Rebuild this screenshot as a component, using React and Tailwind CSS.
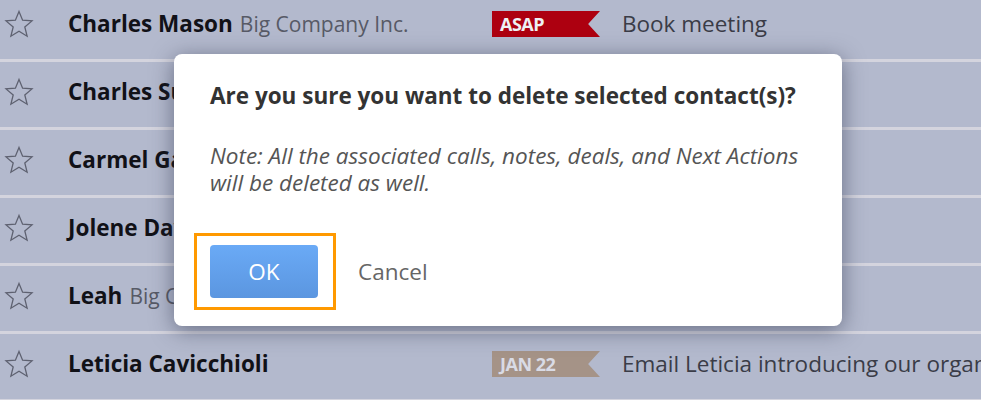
import React from "react";

function Star() {
  return (
    <svg width="30" height="30" viewBox="0 0 30 30" className="shrink-0">
      <polygon
        points="15,2.5 18.6,11.2 28,11.9 20.8,18 23.1,27.2 15,22.2 6.9,27.2 9.2,18 2,11.9 11.4,11.2"
        fill="none"
        stroke="#5e6170"
        strokeWidth="1.3"
        strokeLinejoin="miter"
      />
    </svg>
  );
}

function Tag({ label, color, text }) {
  return (
    <div
      className={`flex h-[26px] w-[108px] shrink-0 items-center pl-[8px] text-[18px] font-bold tracking-[-0.5px] [clip-path:polygon(0_0,100%_0,89%_50%,100%_100%,0_100%)] ${color} ${text}`}
    >
      {label}
    </div>
  );
}

const rows = [
  { name: "Charles Mason", company: "Big Company Inc.", tag: "asap", task: "Book meeting" },
  { name: "Charles Sullivan", company: "" },
  { name: "Carmel Garcia", company: "" },
  { name: "Jolene Davis", company: "" },
  { name: "Leah", company: "Big Company Inc." },
  { name: "Leticia Cavicchioli", company: "", tag: "jan", task: "Email Leticia introducing our organization" },
];

export default function App() {
  return (
    <div
      className="relative h-[400px] w-[981px] overflow-hidden bg-[#b3b9cd]"
      style={{ fontFamily: '"Open Sans", "Liberation Sans", sans-serif' }}
    >
      <div className="-mt-[6px] flex flex-col">
        {rows.map((r, i) => (
          <div
            key={i}
            className="flex h-[68px] shrink-0 items-center border-b-[3px] border-[#d4d4de] pb-[5px] pl-[4px]"
          >
            <Star />
            <div className="ml-[34px] flex w-[424px] shrink-0 items-baseline whitespace-nowrap">
              <span className="text-[22.5px] font-bold text-[#111117]">{r.name}</span>
              {r.company && (
                <span className="ml-[7px] text-[21px] text-[#575a66]">{r.company}</span>
              )}
            </div>
            {r.tag && (
              <div className="flex items-center whitespace-nowrap">
                {r.tag === "asap" ? (
                  <Tag label="ASAP" color="bg-[#ad0010]" text="text-[#eef0f4]" />
                ) : (
                  <Tag label="JAN 22" color="bg-[#a59387]" text="text-[#d9dbe5]" />
                )}
                <span className="ml-[22px] text-[22.5px] text-[#3a3c47]">{r.task}</span>
              </div>
            )}
          </div>
        ))}
      </div>

      <div className="absolute left-[174px] top-[54px] h-[272px] w-[668px] rounded-[8px] bg-white px-[36px] pt-[27px] shadow-[0_4px_22px_rgba(40,45,70,0.55)]">
        <h2 className="whitespace-nowrap text-[22.5px] font-bold leading-[30px] text-[#333333]">
          Are you sure you want to delete selected contact(s)?
        </h2>
        <p className="mt-[31px] whitespace-nowrap text-[22.5px] italic leading-[27px] text-[#555555]">
          Note: All the associated calls, notes, deals, and Next Actions
          <br />
          will be deleted as well.
        </p>
        <div className="mt-[37px] flex items-center">
          <div className="-ml-[16px] border-[3px] border-[#ff9900] pb-[9px] pl-[13px] pr-[15px] pt-[9px]">
            <button className="flex h-[53px] w-[108px] items-center justify-center rounded-[4px] bg-gradient-to-b from-[#6aaaf6] to-[#5b96e0] text-[22.5px] text-white">
              OK
            </button>
          </div>
          <span className="ml-[22px] text-[22.5px] text-[#666666]">Cancel</span>
        </div>
      </div>
    </div>
  );
}
